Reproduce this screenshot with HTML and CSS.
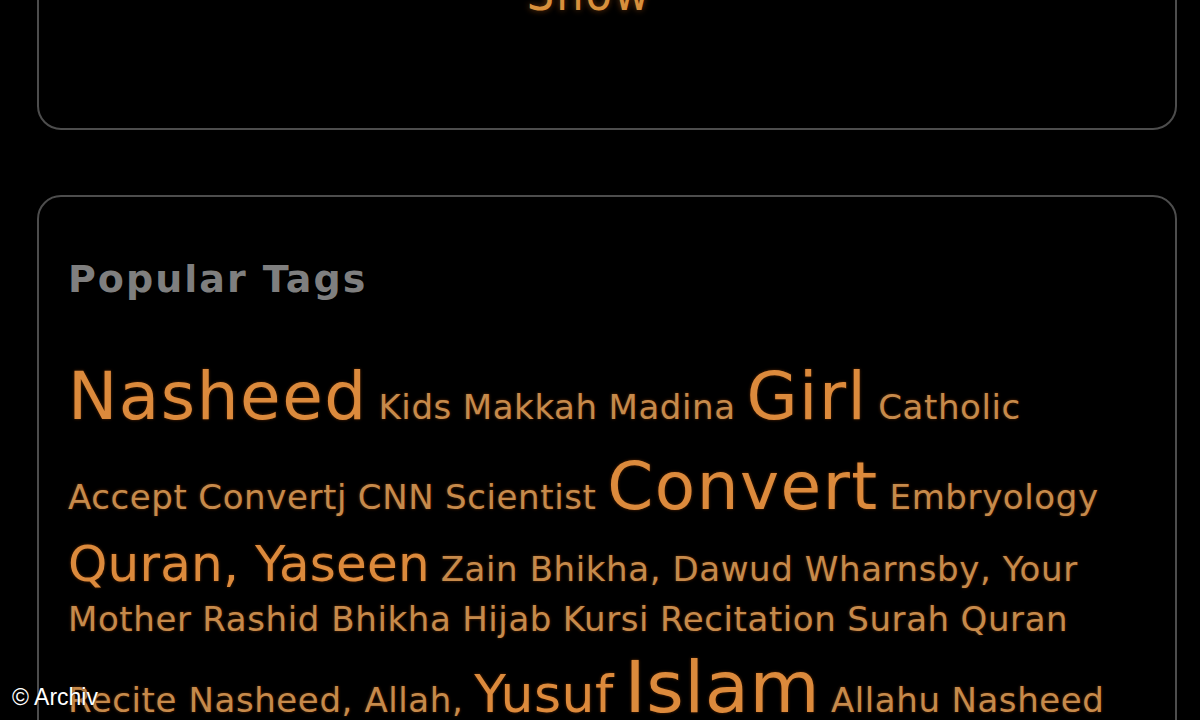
FILE: index.html
```html
<!DOCTYPE html>
<html lang="en">
<head>
    <meta charset="UTF-8">
    <meta name="viewport" content="width=device-width, initial-scale=1.0">
    <title>Popular Tags</title>
    <link rel="stylesheet" href="styles.css">
</head>
<body>

    <div class="page">
        <div class="box box-top">
            <a href="#" class="show-link">Show</a>
        </div>

        <div class="box box-tags">
            <h2 class="box-title">Popular Tags</h2>

            <div class="tag-cloud">
                <a href="#" class="tag tag-xl">Nasheed</a>
                <a href="#" class="tag tag-s">Kids</a>
                <a href="#" class="tag tag-s">Makkah</a>
                <a href="#" class="tag tag-s">Madina</a>
                <a href="#" class="tag tag-xl">Girl</a>
                <a href="#" class="tag tag-s">Catholic</a>
                <a href="#" class="tag tag-s">Accept</a>
                <a href="#" class="tag tag-s">Convertj</a>
                <a href="#" class="tag tag-s">CNN</a>
                <a href="#" class="tag tag-s">Scientist</a>
                <a href="#" class="tag tag-xl">Convert</a>
                <a href="#" class="tag tag-s">Embryology</a>
                <a href="#" class="tag tag-l">Quran, Yaseen</a>
                <a href="#" class="tag tag-s">Zain Bhikha, Dawud Wharnsby, Your Mother</a>
                <a href="#" class="tag tag-s">Rashid Bhikha</a>
                <a href="#" class="tag tag-s">Hijab</a>
                <a href="#" class="tag tag-s">Kursi</a>
                <a href="#" class="tag tag-s">Recitation</a>
                <a href="#" class="tag tag-s">Surah</a>
                <a href="#" class="tag tag-s">Quran</a>
                <a href="#" class="tag tag-s">Recite Nasheed, Allah,</a>
                <a href="#" class="tag tag-m">Yusuf</a>
                <a href="#" class="tag tag-xxl">Islam</a>
                <a href="#" class="tag tag-s">Allahu</a>
                <a href="#" class="tag tag-s">Nasheed</a>
            </div>
        </div>
    </div>

    <div class="credit">© Archiv</div>

</body>
</html>
```

FILE: styles.css
```css
body {
    margin: 0;
    background-color: #000;
    font-family: "DejaVu Sans", Verdana, sans-serif;
    overflow: hidden;
    height: 720px;
}

.page {
    padding: 0 23px 0 37px;
    margin-top: -80px;
}

.box {
    border: 2px solid #4d4d4d;
    border-radius: 24px;
    background-color: #000;
}

.box-top {
    height: 206px;
    padding-right: 36px;
    text-align: center;
    margin-bottom: 65px;
}

.show-link {
    display: inline-block;
    margin-top: 46px;
    font-family: "DejaVu Sans Condensed", "DejaVu Sans", sans-serif;
    font-size: 48px;
    line-height: 50px;
    letter-spacing: 2px;
    color: #d8903c;
    text-decoration: none;
    text-shadow: 0 0 6px rgba(180, 90, 20, 0.6);
}

.box-tags {
    padding: 60px 45px 0 29px;
    height: 700px;
}

.box-title {
    margin: 0 0 51px 0;
    font-size: 38px;
    line-height: 44px;
    letter-spacing: 2px;
    color: #7f7f7f;
    font-weight: bold;
}

.tag-cloud {
    font-size: 34px;
    line-height: 1.3;
}

.tag {
    color: #dc8a3c;
    text-decoration: none;
    text-shadow: 0 0 3px rgba(170, 75, 10, 0.55);
}

.tag-s {
    font-size: 34px;
    letter-spacing: 0.6px;
    color: #c68a4b;
}

.tag-m {
    font-size: 52px;
    letter-spacing: 0.5px;
}

.tag-l {
    font-size: 50px;
    letter-spacing: 0.2px;
}

.tag-xl {
    font-size: 66px;
    line-height: 1.36;
    letter-spacing: 1.5px;
}

.tag-xxl {
    font-size: 72px;
    letter-spacing: 0.5px;
}

.credit {
    position: absolute;
    left: 12px;
    top: 684px;
    font-family: "Liberation Sans", Arial, sans-serif;
    font-size: 23px;
    color: #fff;
    text-shadow: 0 0 2px #000;
}
```
